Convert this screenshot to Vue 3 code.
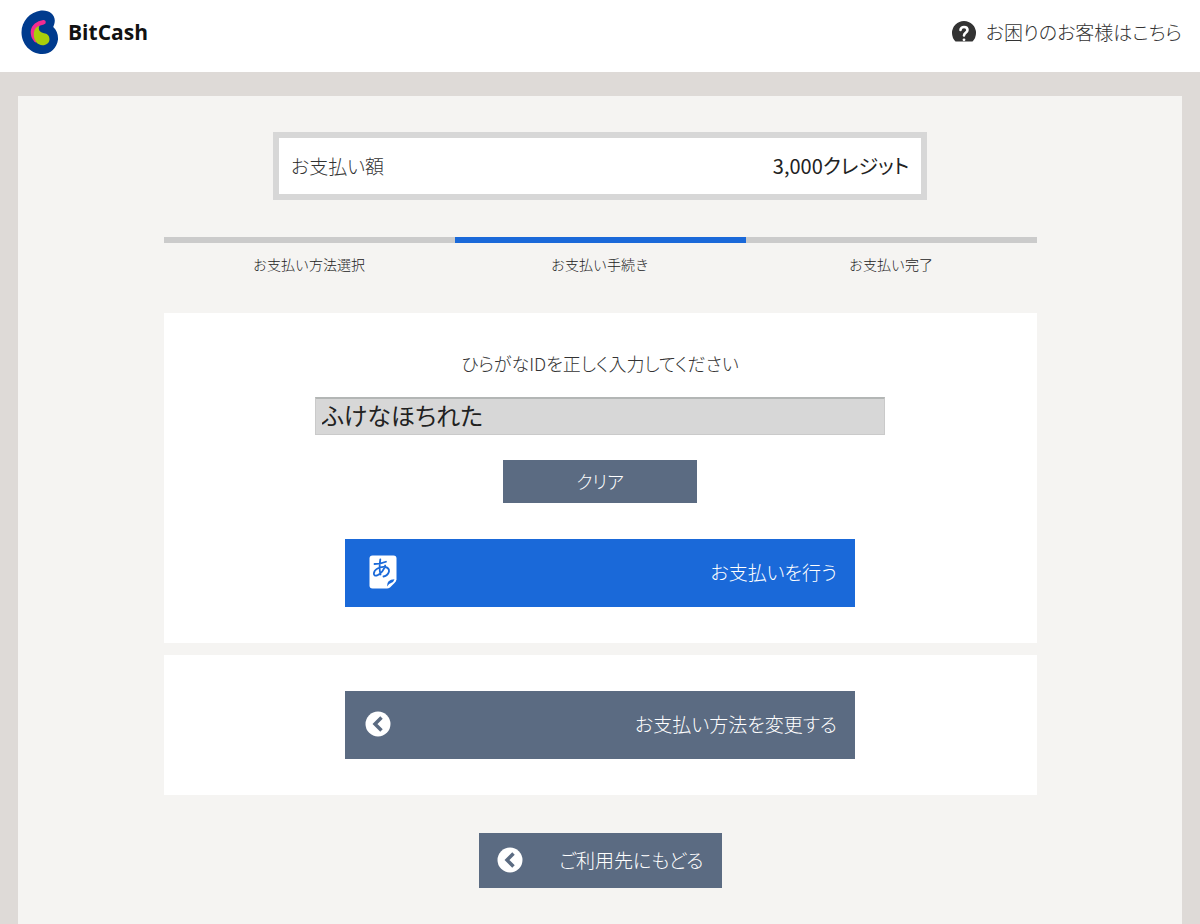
<template>
	<div class="page">
		<header class="header">
			<a class="logo" href="#">
				<svg class="logo-mark" viewBox="0 0 38 44" xmlns="http://www.w3.org/2000/svg" aria-hidden="true">
					<path fill="#003b8e" d="M20 .5C27.500 -.3 33.800 4 33.800 10.500C33.800 13 33 15 32.200 17C35.500 20 37.300 24.500 37 29.500C36 38 29.500 44 21.500 44C9 44 .5 33.500 .5 22.500C.5 11 9 2 20 .5Z" />
					<path fill="none" stroke="#f22c91" stroke-width="4.600" stroke-linecap="round" d="M22.500 12.200C17 13 12.500 16.500 12 21.500C11.800 25 13 28 15 30" />
					<path fill="#a9cf0a" d="M18.500 15.800C15 17 12.800 20 12.800 24.500C12.800 30.500 16.500 35.200 21.500 35.200C25.500 35.200 28.500 32.800 28.500 29.200C28.500 25.500 26 23.500 23 23.200C19 22.800 16.500 19.500 18.500 15.800Z" />
				</svg>
				<span class="logo-text">BitCash</span>
			</a>
			<a class="help" href="#">
				<svg class="help-icon" viewBox="0 0 24 22" xmlns="http://www.w3.org/2000/svg" aria-hidden="true">
					<path fill="#333" d="M3.500 20.500A12 12 0 1 1 20.500 20.500Z" />
					<path fill="none" stroke="#fff" stroke-width="2.600" stroke-linecap="round" stroke-linejoin="round" d="M8.500 9C8.500 5 15.500 5 15.500 9C15.500 11.800 12 11.800 12 14.500" />
					<circle fill="#fff" cx="12" cy="18.800" r="1.400" />
				</svg>
				お困りのお客様はこちら
			</a>
		</header>

		<main class="main">
			<dl class="amount">
				<dt>お支払い額</dt>
				<dd>{{ amount.toLocaleString("en-US") }}クレジット</dd>
			</dl>

			<ol class="steps">
				<li v-for="(step, i) in steps" :key="step" class="step" :class="{ active: i === currentStep }">{{ step }}</li>
			</ol>

			<form class="card" @submit.prevent>
				<label class="id-label" for="hiragana-id">ひらがなIDを正しく入力してください</label>
				<input id="hiragana-id" v-model="hiraganaId" class="id-input" type="text" autocomplete="off">
				<button class="btn btn-clear" type="button" @click="clearId">クリア</button>
				<button class="btn btn-wide btn-pay" type="submit">
					<svg class="pay-icon" viewBox="0 0 28 34" xmlns="http://www.w3.org/2000/svg" aria-hidden="true">
						<path fill="#fff" d="M3.500 .5H24.500Q27.500 .5 27.500 3.500V24.500Q27 26.500 25.500 28L21 32.500Q19.500 33.500 18 33.500H3.500Q.5 33.500 .5 30.500V3.500Q.5 .5 3.500 .5Z" />
						<path fill="#1a69d9" d="M18 31.500Q17.500 24.500 25.500 24.200Q24.500 27 22.500 27.800Q20 28.500 18 31.500Z" />
						<path fill="none" stroke="#1a69d9" stroke-width="1.800" stroke-linecap="round" d="M5.500 9Q12 9 17 6.800M11.300 4.500Q9.800 13 11.500 19.500M16.200 10.500Q14 18 8 20.500C3.500 21.500 4 16 8.500 13.500C13.500 10.500 20.500 11.500 20 16.500Q19 20.500 14.500 21.500" />
					</svg>
					お支払いを行う
				</button>
			</form>

			<section class="card">
				<button class="btn btn-wide" type="button">
					<svg class="back-icon" viewBox="0 0 26 26" xmlns="http://www.w3.org/2000/svg" aria-hidden="true">
						<circle fill="#fff" cx="13" cy="13" r="12.500" />
						<path fill="none" stroke="#5b6b82" stroke-width="3.500" d="M16.500 6.500L10 13L16.500 19.500" />
					</svg>
					お支払い方法を変更する
				</button>
			</section>

			<button class="btn btn-return" type="button">
				<svg class="back-icon" viewBox="0 0 26 26" xmlns="http://www.w3.org/2000/svg" aria-hidden="true">
					<circle fill="#fff" cx="13" cy="13" r="12.500" />
					<path fill="none" stroke="#5b6b82" stroke-width="3.500" d="M16.500 6.500L10 13L16.500 19.500" />
				</svg>
				ご利用先にもどる
			</button>
		</main>
	</div>
</template>

<script setup>

import { ref } from "vue";

const amount = 3000;
const steps = ["お支払い方法選択", "お支払い手続き", "お支払い完了"];
const currentStep = ref(1);
const hiraganaId = ref("ふけなほちれた");

const clearId = () => {
	hiraganaId.value = "";
};

</script>

<style>
body {
	margin: 0;
	background: #dedad7;
}
</style>

<style scoped>
.page {
	display: flex;
	flex-direction: column;
	min-height: 100vh;
	box-sizing: border-box;
	color: #333;
	font-family: "Noto Sans CJK JP", sans-serif;
	font-size: 19px;
	font-weight: 300;
	font-feature-settings: "palt";
	line-height: 28px;
}

.header {
	display: flex;
	align-items: center;
	justify-content: space-between;
	box-sizing: border-box;
	height: 72px;
	padding: 0 18px 8px 21px;
	background: #fff;
}

.logo {
	display: flex;
	align-items: center;
	gap: 9px;
	color: #111;
	text-decoration: none;
}

.logo-mark {
	width: 38px;
	height: 44px;
}

.logo-text {
	font-family: "Open Sans", sans-serif;
	font-size: 21px;
	font-weight: 700;
}

.help {
	display: flex;
	align-items: center;
	gap: 10px;
	color: #333;
	text-decoration: none;
}

.help-icon {
	width: 24px;
	height: 22px;
}

.main {
	display: flex;
	flex: 1;
	flex-direction: column;
	align-items: center;
	margin: 24px 18px 0;
	padding: 36px 0;
	background: #f5f4f2;
}

.amount {
	display: flex;
	align-items: center;
	justify-content: space-between;
	box-sizing: border-box;
	width: 56.2%;
	margin: 0 0 37px;
	padding: 14px 12px;
	border: 6px solid #d7d7d7;
	background: #fff;
}

.amount dd {
	margin: 0;
	color: #222;
	font-size: 20px;
	font-weight: 400;
}

.steps {
	display: grid;
	grid-template-columns: repeat(3, 1fr);
	width: 75%;
	margin: 0 0 28px;
	padding: 0;
	list-style: none;
}

.step {
	padding: 8px 0;
	border-top: 6px solid #cbcbcb;
	color: #222;
	font-size: 14px;
	font-feature-settings: normal;
	line-height: 26px;
	text-align: center;
}

.step.active {
	border-color: #1a69d9;
}

.card {
	display: flex;
	flex-direction: column;
	align-items: center;
	box-sizing: border-box;
	width: 75%;
	margin-bottom: 12px;
	padding: 36px 0;
	background: #fff;
}

.id-label {
	margin-bottom: 20px;
	font-size: 18px;
}

.id-input {
	box-sizing: border-box;
	width: 65.4%;
	height: 38px;
	margin-bottom: 25px;
	padding: 0 6px 4px;
	border: 1px solid #cacaca;
	border-top: 2px solid #b3b6b5;
	border-radius: 0;
	outline: none;
	background: #d7d7d7;
	color: #222;
	font: inherit;
	font-size: 24px;
	font-weight: 400;
	font-feature-settings: inherit;
}

.btn {
	display: flex;
	align-items: center;
	justify-content: space-between;
	box-sizing: border-box;
	margin: 0;
	padding: 0 18px 2px;
	border: 0;
	border-radius: 0;
	background: #5b6b82;
	color: #fff;
	font: inherit;
	font-feature-settings: inherit;
	cursor: pointer;
}

.btn-clear {
	justify-content: center;
	width: 22.2%;
	height: 43px;
	margin-bottom: 36px;
	font-size: 18px;
}

.btn-wide {
	width: 58.4%;
	height: 68px;
	padding-left: 20px;
}

.btn-pay {
	padding-left: 24px;
	background: #1a69d9;
}

.pay-icon {
	width: 28px;
	height: 34px;
}

.back-icon {
	width: 26px;
	height: 26px;
}

.btn-return {
	width: 243px;
	height: 55px;
	margin-top: 26px;
}
</style>
